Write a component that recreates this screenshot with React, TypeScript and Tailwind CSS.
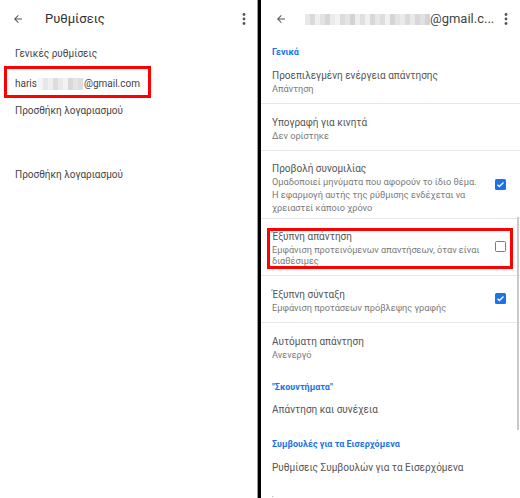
import React from 'react';

const font = { fontFamily: 'Roboto, "Noto Sans", sans-serif' };

const BackArrow: React.FC = () => (
  <svg width="12" height="12" viewBox="0 0 24 24" fill="#555555">
    <path d="M20 11H7.83l5.59-5.59L12 4l-8 8 8 8 1.41-1.41L7.83 13H20v-2z" />
  </svg>
);

const Kebab: React.FC = () => (
  <svg width="4" height="12" viewBox="0 0 4 12" fill="#555555">
    <circle cx="2" cy="1.5" r="1.4" />
    <circle cx="2" cy="6" r="1.4" />
    <circle cx="2" cy="10.5" r="1.4" />
  </svg>
);

// pixelated blur that hides part of the address
const Blur: React.FC<{ shades: string[]; h: number }> = ({ shades, h }) => (
  <span className="inline-flex align-middle" style={{ height: h }}>
    {shades.map((s, i) => (
      <span key={i} className="w-[5px] h-full" style={{ backgroundColor: s }} />
    ))}
  </span>
);

const leftShades = ['#f4f4f4', '#e6e6e6', '#efefef', '#dcdcdc', '#e9e9e9', '#f2f2f2', '#d9d9d9', '#e4e4e4', '#dedede'];
const rightShades = [
  '#e8e8e8', '#dadada', '#efefef', '#e2e2e2', '#d6d6d6', '#ececec', '#f3f3f3', '#dcdcdc', '#e5e5e5', '#d3d3d3',
  '#eeeeee', '#e0e0e0', '#f1f1f1', '#d8d8d8', '#e7e7e7', '#dddddd', '#f0f0f0', '#d5d5d5', '#e3e3e3', '#eaeaea',
  '#dbdbdb', '#e9e9e9', '#d7d7d7', '#e1e1e1', '#d4d4d4',
];

const Checked: React.FC = () => (
  <div className="w-[11px] h-[11px] rounded-[1.5px] bg-[#1a73e8] flex items-center justify-center">
    <svg width="9" height="9" viewBox="0 0 24 24" fill="none" stroke="#fff" strokeWidth="3.5">
      <path d="M4 12.5l5 5L20 6.5" />
    </svg>
  </div>
);

const Unchecked: React.FC = () => (
  <div className="w-[11px] h-[11px] rounded-[1.5px] border-[1.5px] border-[#7a7a7a]" />
);

const Title: React.FC<{ children: React.ReactNode }> = ({ children }) => (
  <div className="text-[10px] leading-[13px] text-[#555555]">{children}</div>
);

const Sub: React.FC<{ children: React.ReactNode }> = ({ children }) => (
  <div className="text-[9.2px] leading-[13px] text-[#7a7a7a]">{children}</div>
);

const Section: React.FC<{ children: React.ReactNode }> = ({ children }) => (
  <div className="text-[9px] leading-[12px] font-bold text-[#1a73e8]">{children}</div>
);

export default function App() {
  return (
    <div className="flex w-[520px] h-[498px] overflow-hidden bg-white" style={font}>
      {/* left: general settings */}
      <div className="w-[258px] shrink-0 border-r border-[#9a9a9a]">
        <div className="h-[38px] flex items-center pl-[12px] pr-[11px]">
          <BackArrow />
          <span className="ml-[21px] text-[13px] text-[#333333]">Ρυθμίσεις</span>
          <span className="ml-auto"><Kebab /></span>
        </div>
        <div className="mt-[1px] h-[28px] flex items-center pl-[15px] text-[10px] text-[#444444]">Γενικές ρυθμίσεις</div>
        <div className="relative h-[33px] flex items-center pl-[15px] text-[10px] text-[#444444]">
          <span>haris</span>
          <span className="mx-[1px]"><Blur shades={leftShades} h={12} /></span>
          <span>@gmail.com</span>
          <div className="absolute left-[4px] top-[-1px] w-[147px] h-[32px] border-[3px] border-[#ff0000]" />
        </div>
        <div className="-mt-[1px] h-[22px] flex items-center pl-[15px] text-[10px] text-[#444444]">Προσθήκη λογαριασμού</div>
        <div className="mt-[42px] h-[22px] flex items-center pl-[15px] text-[10px] text-[#444444]">Προσθήκη λογαριασμού</div>
      </div>

      <div className="w-[3px] shrink-0 bg-black" />

      {/* right: account settings */}
      <div className="relative flex-1 min-w-0">
        <div className="h-[38px] flex items-center pl-[14px] pr-[12px]">
          <BackArrow />
          <span className="ml-[18px] flex items-center text-[13px] text-[#333333] whitespace-nowrap">
            <Blur shades={rightShades} h={11} />
            <span className="text-[#444444]">@gmail.c...</span>
          </span>
          <span className="ml-auto"><Kebab /></span>
        </div>

        <div className="h-[27px] flex items-center pl-[11px]">
          <Section>Γενικά</Section>
        </div>

        <div className="h-[39px] pl-[11px] pt-[4px] border-b border-[#e6e6e6]">
          <Title>Προεπιλεγμένη ενέργεια απάντησης</Title>
          <Sub>Απάντηση</Sub>
        </div>

        <div className="h-[47px] pl-[11px] pt-[12px] border-b border-[#e6e6e6]">
          <Title>Υπογραφή για κινητά</Title>
          <Sub>Δεν ορίστηκε</Sub>
        </div>

        <div className="h-[68px] pl-[11px] pr-[14px] pt-[11px] border-b border-[#e6e6e6] flex items-start">
          <div className="flex-1">
            <Title>Προβολή συνομιλίας</Title>
            <Sub>
              Ομαδοποιεί μηνύματα που αφορούν το ίδιο θέμα.<br />
              Η εφαρμογή αυτής της ρύθμισης ενδέχεται να<br />
              χρειαστεί κάποιο χρόνο
            </Sub>
          </div>
          <div className="mt-[17px]"><Checked /></div>
        </div>

        <div className="relative h-[57px] pl-[11px] pr-[14px] pt-[12px] border-b border-[#e6e6e6] flex items-start">
          <div className="flex-1">
            <div className="text-[10px] leading-[12px] text-[#555555]">Έξυπνη απάντηση</div>
            <div className="text-[9.2px] leading-[11px] text-[#7a7a7a] mt-[0.5px]">
              Εμφάνιση προτεινόμενων απαντήσεων, όταν είναι<br />
              διαθέσιμες
            </div>
          </div>
          <div className="mt-[10px]"><Unchecked /></div>
          <div className="absolute left-[6px] top-[9px] w-[246px] h-[41px] border-[3px] border-[#ff0000]" />
        </div>

        <div className="h-[47px] pl-[11px] pr-[14px] pt-[12px] border-b border-[#e6e6e6] flex items-start">
          <div className="flex-1">
            <Title>Έξυπνη σύνταξη</Title>
            <Sub>Εμφάνιση προτάσεων πρόβλεψης γραφής</Sub>
          </div>
          <div className="mt-[5px]"><Checked /></div>
        </div>

        <div className="h-[50px] pl-[11px] pt-[12px]">
          <Title>Αυτόματη απάντηση</Title>
          <Sub>Ανενεργό</Sub>
        </div>

        <div className="h-[28px] flex items-center pl-[11px]">
          <Section>"Σκουντήματα"</Section>
        </div>

        <div className="h-[16px] flex items-center pl-[11px]">
          <Title>Απάντηση και συνέχεια</Title>
        </div>

        <div className="h-[36px] flex items-end pb-[3px] pl-[11px]">
          <Section>Συμβουλές για τα Εισερχόμενα</Section>
        </div>

        <div className="h-[28px] flex items-center pl-[11px]">
          <Title>Ρυθμίσεις Συμβουλών για τα Εισερχόμενα</Title>
        </div>

        <div className="absolute left-[11px] top-[496px] w-[1px] h-[1px] bg-[#bbbbbb]" />
        <div className="absolute right-[1px] top-[217px] w-[2px] h-[213px] bg-[#c9c9c9]" />
      </div>
    </div>
  );
}
